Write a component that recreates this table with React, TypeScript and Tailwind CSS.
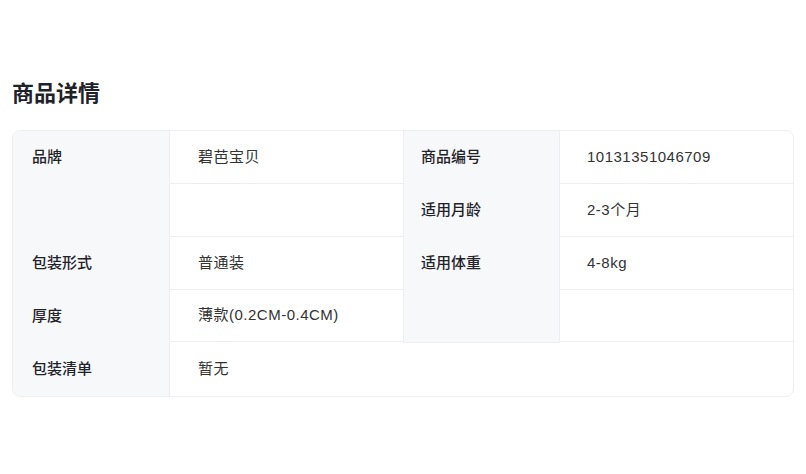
const font = { fontFamily: "'Liberation Sans', 'Noto Sans CJK SC', sans-serif" };

type Row = { label: string; value: string; h: string };

const leftRows: Row[] = [
    { label: "品牌", value: "碧芭宝贝", h: "h-[53px]" },
    { label: "", value: "", h: "h-[53px]" },
    { label: "包装形式", value: "普通装", h: "h-[53px]" },
    { label: "厚度", value: "薄款(0.2CM-0.4CM)", h: "h-[52px]" },
];

const rightRows: Row[] = [
    { label: "商品编号", value: "10131351046709", h: "h-[53px]" },
    { label: "适用月龄", value: "2-3个月", h: "h-[53px]" },
    { label: "适用体重", value: "4-8kg", h: "h-[53px]" },
    { label: "", value: "", h: "h-[52px]" },
];

export default function App() {
    return (
        <div className="h-[474px] w-[806px] bg-white px-3 pt-[78px]" style={font}>
            <h2 className="text-[22px] font-semibold leading-[32px] text-[#1f2329]">商品详情</h2>

            <div className="mt-[20px] overflow-hidden rounded-lg border border-[#eceef1] text-[15px]">
                <div className="flex">
                    {/* 左半边 */}
                    <div className="w-[157px] border-r border-[#eceef1] bg-[#f7f8fa]">
                        {leftRows.map((r, i) => (
                            <div key={i} className={`${r.h} flex items-center pl-[19px] font-medium text-[#1f2329]`}>
                                {r.label}
                            </div>
                        ))}
                    </div>
                    <div className="w-[234px] border-r border-[#eceef1]">
                        {leftRows.map((r, i) => (
                            <div key={i} className={`${r.h} flex items-center border-b border-[#eceef1] pl-[28px] tracking-[0.5px] text-[#333333]`}>
                                {r.value}
                            </div>
                        ))}
                    </div>

                    {/* 右半边 */}
                    <div className="w-[156px] border-r border-b border-[#eceef1] bg-[#f7f8fa]">
                        {rightRows.map((r, i) => (
                            <div key={i} className={`${r.h} flex items-center pl-[17px] font-medium text-[#1f2329]`}>
                                {r.label}
                            </div>
                        ))}
                    </div>
                    <div className="flex-1">
                        {rightRows.map((r, i) => (
                            <div key={i} className={`${r.h} flex items-center border-b border-[#eceef1] pl-[27px] tracking-[0.5px] text-[#333333]`}>
                                {r.value}
                            </div>
                        ))}
                    </div>
                </div>

                <div className="flex h-[53px]">
                    <div className="flex w-[157px] items-center border-r border-[#eceef1] bg-[#f7f8fa] pl-[19px] font-medium text-[#1f2329]">
                        包装清单
                    </div>
                    <div className="flex flex-1 items-center pl-[28px] tracking-[0.5px] text-[#333333]">暂无</div>
                </div>
            </div>
        </div>
    );
}
